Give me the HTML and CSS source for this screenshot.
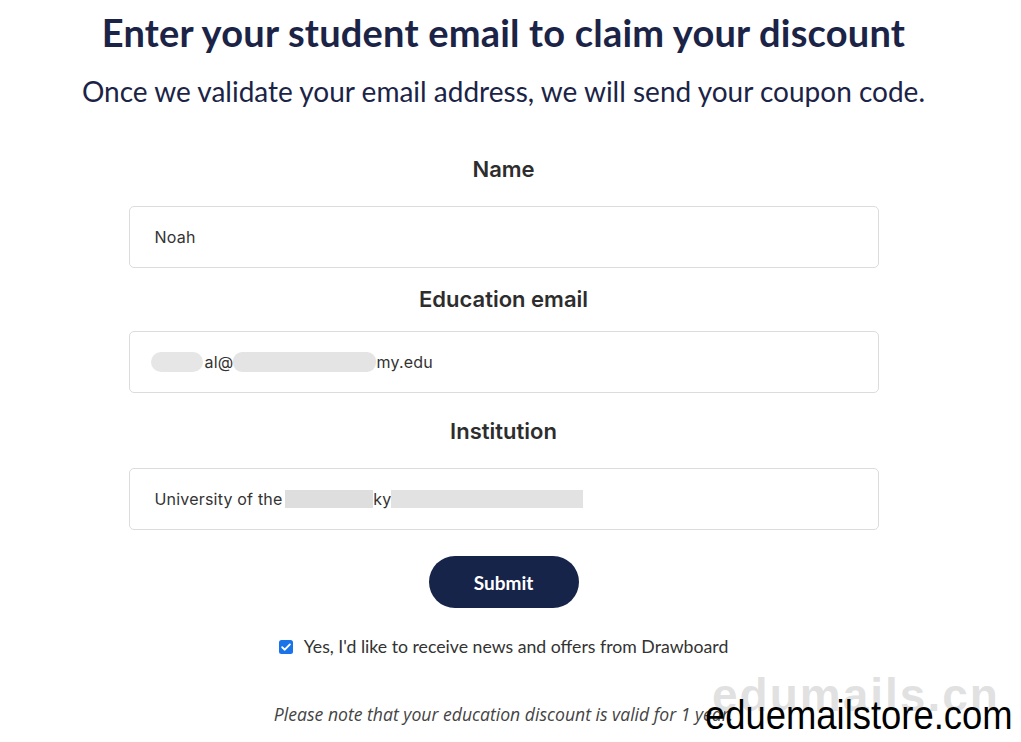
FILE: index.html
```html
<!DOCTYPE html>
<html lang="en">
<head>
<meta charset="utf-8">
<title>Student discount</title>
<link rel="stylesheet" href="styles.css">
</head>
<body>
<main class="page">
  <h1 class="title">Enter your student email to claim your discount</h1>
  <p class="subtitle">Once we validate your email address, we will send your coupon code.</p>

  <form class="form">
    <div class="field field-name">
      <label class="label">Name</label>
      <div class="input"><span class="value">Noah</span></div>
    </div>
    <div class="field field-email">
      <label class="label">Education email</label>
      <div class="input">
        <span class="blur blur-a"></span><span class="value">al@</span><span class="blur blur-b"></span><span class="value">my.edu</span>
      </div>
    </div>
    <div class="field field-inst">
      <label class="label">Institution</label>
      <div class="input">
        <span class="value">University of the </span><span class="blur blur-c"></span><span class="value">ky</span><span class="blur blur-d"></span>
      </div>
    </div>

    <button type="button" class="submit">Submit</button>

    <label class="consent">
      <span class="check"><svg viewBox="0 0 14 14" width="14" height="14"><rect x="0" y="0" width="14" height="14" rx="2.5" fill="#1a73e8"/><path d="M3.2 7.2 L5.8 9.7 L10.9 4.4" fill="none" stroke="#fff" stroke-width="1.9" stroke-linecap="round" stroke-linejoin="round"/></svg></span>
      <span class="consent-text">Yes, I'd like to receive news and offers from Drawboard</span>
    </label>

    <p class="note">Please note that your education discount is valid for 1 year.</p>
  </form>

  <div class="wm wm-grey">edumails.cn</div>
  <div class="wm wm-black">eduemailstore.com</div>
</main>
</body>
</html>
```
FILE: styles.css
```css
* { box-sizing: border-box; }
html, body { margin: 0; padding: 0; background: #fff; }
body { width: 1021px; height: 742px; overflow: hidden; position: relative; }

.page {
  width: 1007px;
  display: flex;
  flex-direction: column;
  align-items: center;
  padding-top: 9px;
}

.title {
  margin: 0;
  font-family: "Lato", "Noto Sans", sans-serif;
  font-weight: 700;
  font-size: 38px;
  line-height: 46px;
  color: #1b2446;
  letter-spacing: 0.2px;
  white-space: nowrap;
}

.subtitle {
  margin: 19px 0 0;
  font-family: "Lato", "Noto Sans", sans-serif;
  font-weight: 400;
  font-size: 28px;
  line-height: 34px;
  color: #1b2446;
  white-space: nowrap;
}

.form {
  width: 750px;
  margin-top: 47px;
  display: flex;
  flex-direction: column;
  align-items: center;
}

.field {
  width: 100%;
  display: flex;
  flex-direction: column;
  align-items: center;
}
.field-email { margin-top: 17px; }
.field-inst { margin-top: 24px; }

.label {
  font-family: "Inter", "Noto Sans", sans-serif;
  font-weight: 600;
  font-size: 22px;
  line-height: 28px;
  color: #2d2d2d;
  margin-bottom: 23px;
}
.field-email .label { margin-bottom: 18px; }

.input {
  width: 100%;
  height: 62px;
  border: 1px solid #dcdcdc;
  border-radius: 5px;
  display: flex;
  align-items: center;
  padding: 0 25px;
  font-family: "Inter", "Noto Sans", sans-serif;
  font-size: 16px;
  letter-spacing: 0.2px;
  color: #333;
}
.value { white-space: pre; }

.blur { display: inline-block; height: 20px; background: #e4e4e4; }
.blur-a { width: 52px; border-radius: 10px; margin-left: -4px; margin-right: 2px; background: #e6e6e6; }
.blur-b { width: 143px; border-radius: 9px; }
.blur-c { width: 88px; height: 18px; background: #dedede; margin-left: -2px; }
.blur-d { width: 192px; height: 18px; background: #e2e2e2; }

.submit {
  margin-top: 26px;
  width: 150px;
  height: 52px;
  border: none;
  border-radius: 26px;
  background: #16244a;
  color: #fff;
  font-family: "Lato", "Noto Sans", sans-serif;
  font-weight: 700;
  font-size: 19px;
}

.consent {
  margin-top: 27px;
  display: flex;
  align-items: center;
  gap: 11px;
  font-family: "Lato", "Noto Sans", sans-serif;
  font-size: 17.7px;
  line-height: 24px;
  color: #333;
}
.check { display: flex; }

.note {
  margin: 43px 0 0;
  font-family: "Open Sans", "Noto Sans", sans-serif;
  font-style: italic;
  font-weight: 400;
  font-size: 17.6px;
  line-height: 24px;
  color: #444;
  white-space: nowrap;
}

.wm {
  position: absolute;
  white-space: nowrap;
}
.wm-grey {
  left: 712px;
  top: 668px;
  font-family: "Liberation Sans", sans-serif;
  font-weight: 700;
  font-size: 46px;
  color: rgba(200, 200, 200, 0.55);
  letter-spacing: 2px;
}
.wm-black {
  left: 705px;
  top: 692px;
  font-family: "Liberation Sans", sans-serif;
  font-size: 40px;
  line-height: 46px;
  color: #000;
  transform: scaleX(0.91);
  transform-origin: left top;
}
```
